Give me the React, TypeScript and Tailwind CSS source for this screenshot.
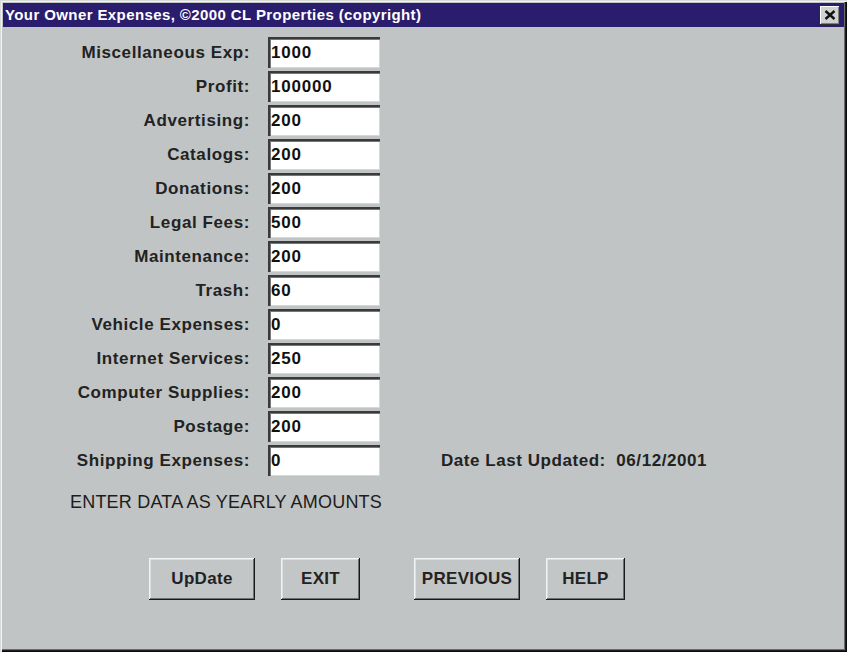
import React from "react";

type Field = { label: string; value: string };

const fields: Field[] = [
  { label: "Miscellaneous Exp:", value: "1000" },
  { label: "Profit:", value: "100000" },
  { label: "Advertising:", value: "200" },
  { label: "Catalogs:", value: "200" },
  { label: "Donations:", value: "200" },
  { label: "Legal Fees:", value: "500" },
  { label: "Maintenance:", value: "200" },
  { label: "Trash:", value: "60" },
  { label: "Vehicle Expenses:", value: "0" },
  { label: "Internet Services:", value: "250" },
  { label: "Computer Supplies:", value: "200" },
  { label: "Postage:", value: "200" },
  { label: "Shipping Expenses:", value: "0" },
];

const font = { fontFamily: '"Liberation Sans", Arial, sans-serif' };

function Win95Button({ label, width, className }: { label: string; width: string; className?: string }) {
  return (
    <button
      type="button"
      className={`${width} ${className ?? ""} h-[42px] bg-[#c3c6c6] text-[17px] font-bold tracking-[0.3px] text-[#222] shadow-[inset_-1px_-1px_#1a1a1a,inset_1px_1px_#f4f4f4,inset_-2px_-2px_#6e7070,inset_2px_2px_#dedede]`}
    >
      {label}
    </button>
  );
}

export default function App() {
  return (
    <div
      style={font}
      className="flex h-[652px] w-[847px] flex-col bg-[#c1c4c4] p-[3px] shadow-[inset_1px_1px_#d8dada,inset_2px_2px_#f4f4f4,inset_-1px_-1px_#0a0a0a,inset_-2px_-2px_#1e2020,inset_-3px_-3px_#6a6c6c]"
    >
      {/* title bar */}
      <div className="flex h-[24px] items-center justify-between bg-[#2b1d6e] pl-[2px] pr-[4px]">
        <span className="text-[15px] font-bold tracking-[0.4px] text-white">
          Your Owner Expenses, ©2000 CL Properties (copyright)
        </span>
        <span className="flex h-[19px] w-[20px] items-center justify-center bg-[#d0d2d2] shadow-[inset_-1px_-1px_#303030,inset_1px_1px_#ffffff,inset_-2px_-2px_#808080]">
          <svg width="12" height="10" viewBox="0 0 12 10">
            <path d="M1.5 1 L10.5 9 M10.5 1 L1.5 9" stroke="#111" strokeWidth="2.4" />
          </svg>
        </span>
      </div>

      {/* fields */}
      <div className="flex flex-col gap-[3px] pt-[10px]">
        {fields.map((f, i) => (
          <div key={f.label} className="flex h-[31px] items-center">
            <span className="w-[247px] text-right text-[17px] font-bold tracking-[0.6px] text-[#222]">
              {f.label}
            </span>
            <div className="ml-[18px] flex h-[31px] w-[112px] items-center bg-white pl-[3px] pt-[1px] shadow-[inset_2px_2px_#3a3a3a,inset_3px_3px_#777,inset_-1px_-1px_#d8d8d8]">
              <span className="text-[17px] font-bold tracking-[0.8px] text-[#111]">{f.value}</span>
            </div>
            {i === fields.length - 1 && (
              <span className="ml-[61px] text-[17px] font-bold tracking-[0.55px] text-[#222]">
                Date Last Updated:&nbsp; 06/12/2001
              </span>
            )}
          </div>
        ))}
      </div>

      <div className="mt-[16px] pl-[67px] text-[18px] leading-[20px] tracking-[0.2px] text-[#1c1c1c]">
        ENTER DATA AS YEARLY AMOUNTS
      </div>

      <div className="mt-[46px] flex pl-[146px]">
        <Win95Button label="UpDate" width="w-[106px]" />
        <Win95Button label="EXIT" width="w-[79px]" className="ml-[26px]" />
        <Win95Button label="PREVIOUS" width="w-[106px]" className="ml-[54px]" />
        <Win95Button label="HELP" width="w-[79px]" className="ml-[26px]" />
      </div>
    </div>
  );
}
